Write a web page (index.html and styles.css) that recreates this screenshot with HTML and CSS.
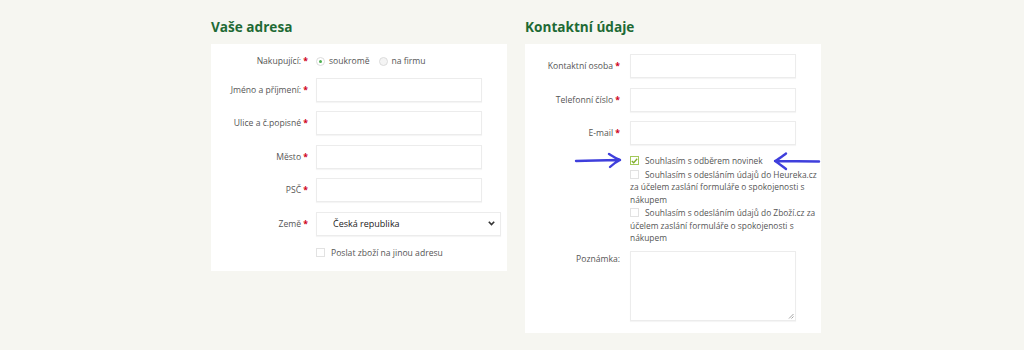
FILE: index.html
```html
<!DOCTYPE html>
<html lang="cs">
<head>
<meta charset="utf-8">
<link rel="stylesheet" href="styles.css">
</head>
<body>
<div class="page">
  <section class="col">
    <h2 class="title">Vaše adresa</h2>
    <div class="card card-left">
      <div class="row row-radio">
        <div class="lbl">Nakupující: <span class="req">*</span></div>
        <div class="radios">
          <span class="radio on"></span><span class="rtext">soukromě</span>
          <span class="radio"></span><span class="rtext">na firmu</span>
        </div>
      </div>
      <div class="row"><div class="lbl">Jméno a příjmení: <span class="req">*</span></div><div class="input"></div></div>
      <div class="row"><div class="lbl">Ulice a č.popisné <span class="req">*</span></div><div class="input"></div></div>
      <div class="row"><div class="lbl">Město <span class="req">*</span></div><div class="input"></div></div>
      <div class="row"><div class="lbl">PSČ <span class="req">*</span></div><div class="input"></div></div>
      <div class="row"><div class="lbl">Země <span class="req">*</span></div>
        <div class="select"><span>Česká republika</span>
          <svg class="chev" width="7" height="5" viewBox="0 0 7 5"><path d="M0.8 0.8 L3.5 3.6 L6.2 0.8" fill="none" stroke="#333" stroke-width="1.6"/></svg>
        </div>
      </div>
      <div class="row row-check"><div class="lbl"></div><div class="checkline"><span class="cb"></span>Poslat zboží na jinou adresu</div></div>
    </div>
  </section>
  <section class="col">
    <h2 class="title">Kontaktní údaje</h2>
    <div class="card card-right">
      <div class="row"><div class="lbl">Kontaktní osoba <span class="req">*</span></div><div class="input"></div></div>
      <div class="row"><div class="lbl">Telefonní číslo <span class="req">*</span></div><div class="input"></div></div>
      <div class="row"><div class="lbl">E-mail <span class="req">*</span></div><div class="input"></div></div>
      <div class="consents">
        <p class="consent"><span class="cb checked"><svg width="7" height="6" viewBox="0 0 7 6"><path d="M0.8 3 L2.7 4.8 L6.2 0.8" fill="none" stroke="#7fae2a" stroke-width="1.3"/></svg></span>Souhlasím s odběrem novinek</p>
        <p class="consent"><span class="cb"></span>Souhlasím s odesláním údajů do Heureka.cz za účelem zaslání formuláře o spokojenosti s nákupem</p>
        <p class="consent"><span class="cb"></span>Souhlasím s odesláním údajů do Zboží.cz za účelem zaslání formuláře o spokojenosti s nákupem</p>
      </div>
      <div class="row row-note"><div class="lbl">Poznámka:</div><div class="textarea"><svg class="grip" width="6" height="6" viewBox="0 0 6 6"><path d="M1 5.5 L5.5 1 M3.5 5.5 L5.5 3.5" stroke="#999" stroke-width="0.9"/></svg></div></div>
      <svg class="arrow arrow-l" width="50" height="20" viewBox="0 0 50 20"><path d="M2 11 C15 10.5 30 10.2 46 10 M35 4 C39 6.5 42 8.5 46 10 C42 12 39 14 36 17" fill="none" stroke="#3f3fdc" stroke-width="2.4" stroke-linecap="round" stroke-linejoin="round"/></svg>
      <svg class="arrow arrow-r" width="52" height="22" viewBox="0 0 52 22"><path d="M48 11.5 C34 11.2 18 11 4 11 M15 3.5 C11 6.5 8 9 4 11 C8 13.5 11 16 15 19" fill="none" stroke="#3f3fdc" stroke-width="2.4" stroke-linecap="round" stroke-linejoin="round"/></svg>
    </div>
  </section>
</div>
</body>
</html>
```
FILE: styles.css
```css
* { box-sizing: border-box; }
html, body { margin: 0; padding: 0; }
body {
  background: #f6f6f1;
  font-family: "Open Sans", "Liberation Sans", sans-serif;
  color: #555;
  font-size: 8.6px;
  width: 1024px;
  height: 350px;
  overflow: hidden;
}
.page {
  display: flex;
  gap: 17px;
  padding: 17px 0 0 211px;
}
.col { width: 297px; }
.title {
  margin: 0 0 7px 0;
  font-size: 13.6px;
  line-height: 20px;
  font-weight: 700;
  color: #1e6a35;
}
.card {
  background: #fff;
  position: relative;
  display: flex;
  flex-direction: column;
  gap: 9.5px;
}
.card-left { padding: 10px 0 12px 0; width: 296px; }
.card-right { padding: 10px 0 12px 0; width: 296px; }
.row {
  display: flex;
  align-items: center;
  height: 24px;
}
.lbl {
  text-align: right;
  white-space: nowrap;
  line-height: 12px;
}
.card-left .lbl { width: 97px; margin-right: 8px; }
.card-right .lbl { width: 95px; margin-right: 10px; }
.req { color: #d0021b; font-weight: 700; }
.input {
  width: 166px;
  height: 24px;
  border: 1px solid #ececec;
  box-shadow: 0 1px 1px rgba(0,0,0,0.04);
  background: #fff;
}
.row-radio { height: 14px; }
.radios { display: flex; align-items: center; }
.radio {
  width: 9px; height: 9px;
  border-radius: 50%;
  border: 1px solid #dcdcdc;
  background: #f4f4f4;
  margin-right: 4px;
  position: relative;
}
.radio.on { background: #fff; }
.radio.on::after {
  content: "";
  position: absolute;
  left: 2px; top: 2px;
  width: 3px; height: 3px;
  border-radius: 50%;
  background: #4caf50;
}
.rtext { margin-right: 9px; }
.select {
  width: 185px;
  height: 24px;
  border: 1px solid #ececec;
  box-shadow: 0 1px 1px rgba(0,0,0,0.04);
  display: flex;
  align-items: center;
  justify-content: space-between;
  padding: 0 5px 0 16px;
  color: #222;
  font-size: 9px;
}
.row-check { height: 12px; margin-top: 1.5px; }
.checkline { display: flex; align-items: center; }
.cb {
  display: inline-block;
  width: 9px; height: 9px;
  border: 1px solid #e2e2e2;
  background: #fff;
  margin-right: 6px;
  vertical-align: -1px;
  position: relative;
}
.cb.checked { border-color: #a3c95a; }
.cb svg { position: absolute; left: 0; top: 0.5px; }
.consents {
  margin: 0.5px 0 0 105px;
  width: 190px;
  display: flex;
  flex-direction: column;
  gap: 1px;
  font-size: 8.4px;
}
.consent { margin: 0; line-height: 12.5px; }
.row-note { height: 70px; align-items: flex-start; margin-top: -3px; }
.row-note .lbl { padding-top: 2px; }
.textarea {
  width: 166px;
  height: 70px;
  border: 1px solid #ececec;
  box-shadow: 0 1px 1px rgba(0,0,0,0.04);
  position: relative;
}
.grip { position: absolute; right: 1px; bottom: 1px; }
.arrow { position: absolute; }
.arrow-l { left: 49px; top: 106px; }
.arrow-r { left: 246px; top: 106px; }
```
